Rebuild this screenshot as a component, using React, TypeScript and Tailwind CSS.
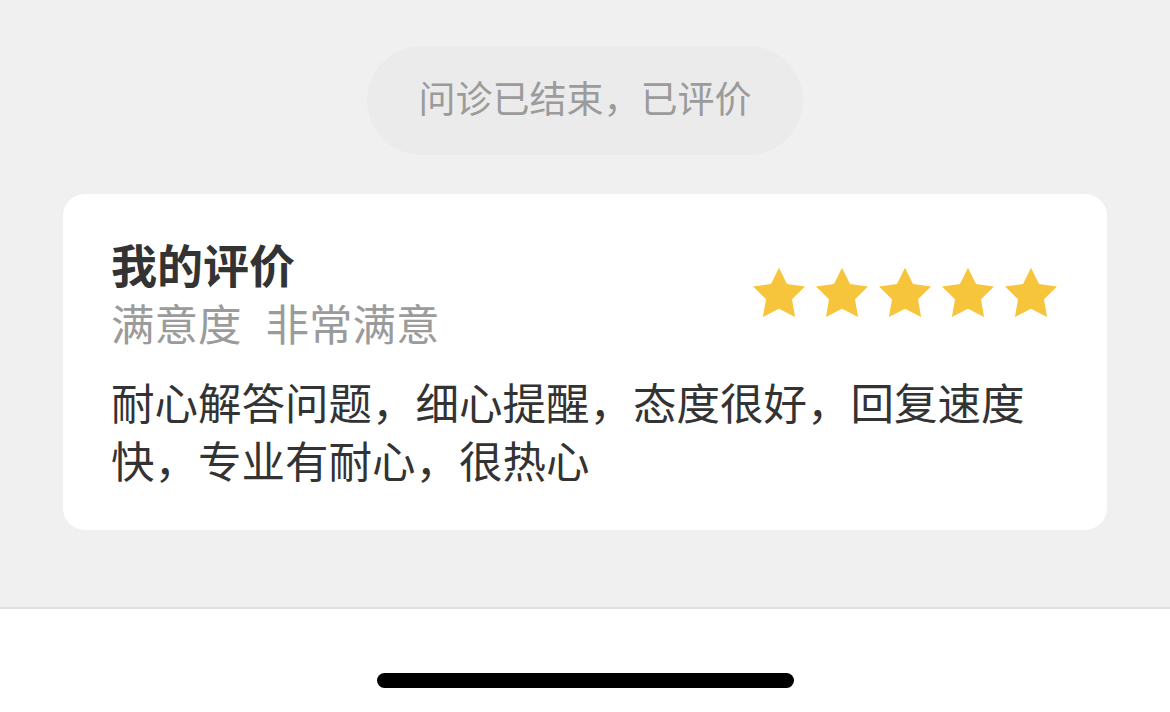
import * as React from "react";

const stars = [0, 1, 2, 3, 4];

function Star() {
  return (
    <svg width="52" height="51" viewBox="2 2 20 19.1" className="block">
      <polygon
        points="12,2 15.09,8.26 22,9.27 17,14.14 18.18,21.02 12,17.77 5.82,21.02 7,14.14 2,9.27 8.91,8.26"
        fill="#f7c53c"
      />
    </svg>
  );
}

export default function App() {
  return (
    <div className="flex h-[712px] w-[1170px] flex-col overflow-hidden font-['Noto_Sans_CJK_SC',sans-serif]">
      <div className="flex h-[609px] flex-col items-center border-b-2 border-[#e0e0e0] bg-[#f0f0f0] pt-[46px]">
        <div className="flex h-[109px] w-[436px] items-center justify-center rounded-full bg-[#ebebeb] pb-[6px] text-[37px] leading-none text-[#9b9b9b]">
          问诊已结束，已评价
        </div>

        <div className="mt-[39px] h-[336px] w-[1044px] rounded-[22px] bg-white px-[48px] pt-[39px]">
          <div className="flex items-center justify-between">
            <div>
              <div className="text-[46px] font-semibold leading-[60px] text-[#333333]">
                我的评价
              </div>
              <div className="flex text-[43.5px] leading-[60px] text-[#9b9b9b]">
                <span>满意度</span>
                <span className="ml-[24px]">非常满意</span>
              </div>
            </div>
            <div className="mr-[2px] mb-[2px] flex gap-[11px]">
              {stars.map((i) => (
                <Star key={i} />
              ))}
            </div>
          </div>
          <div className="mt-[20px] text-[43.5px] leading-[58px] text-[#333333]">
            耐心解答问题，细心提醒，态度很好，回复速度快，专业有耐心，很热心
          </div>
        </div>
      </div>

      <div className="flex flex-1 justify-center bg-white pt-[64px]">
        <div className="h-[15px] w-[417px] rounded-full bg-black" />
      </div>
    </div>
  );
}
